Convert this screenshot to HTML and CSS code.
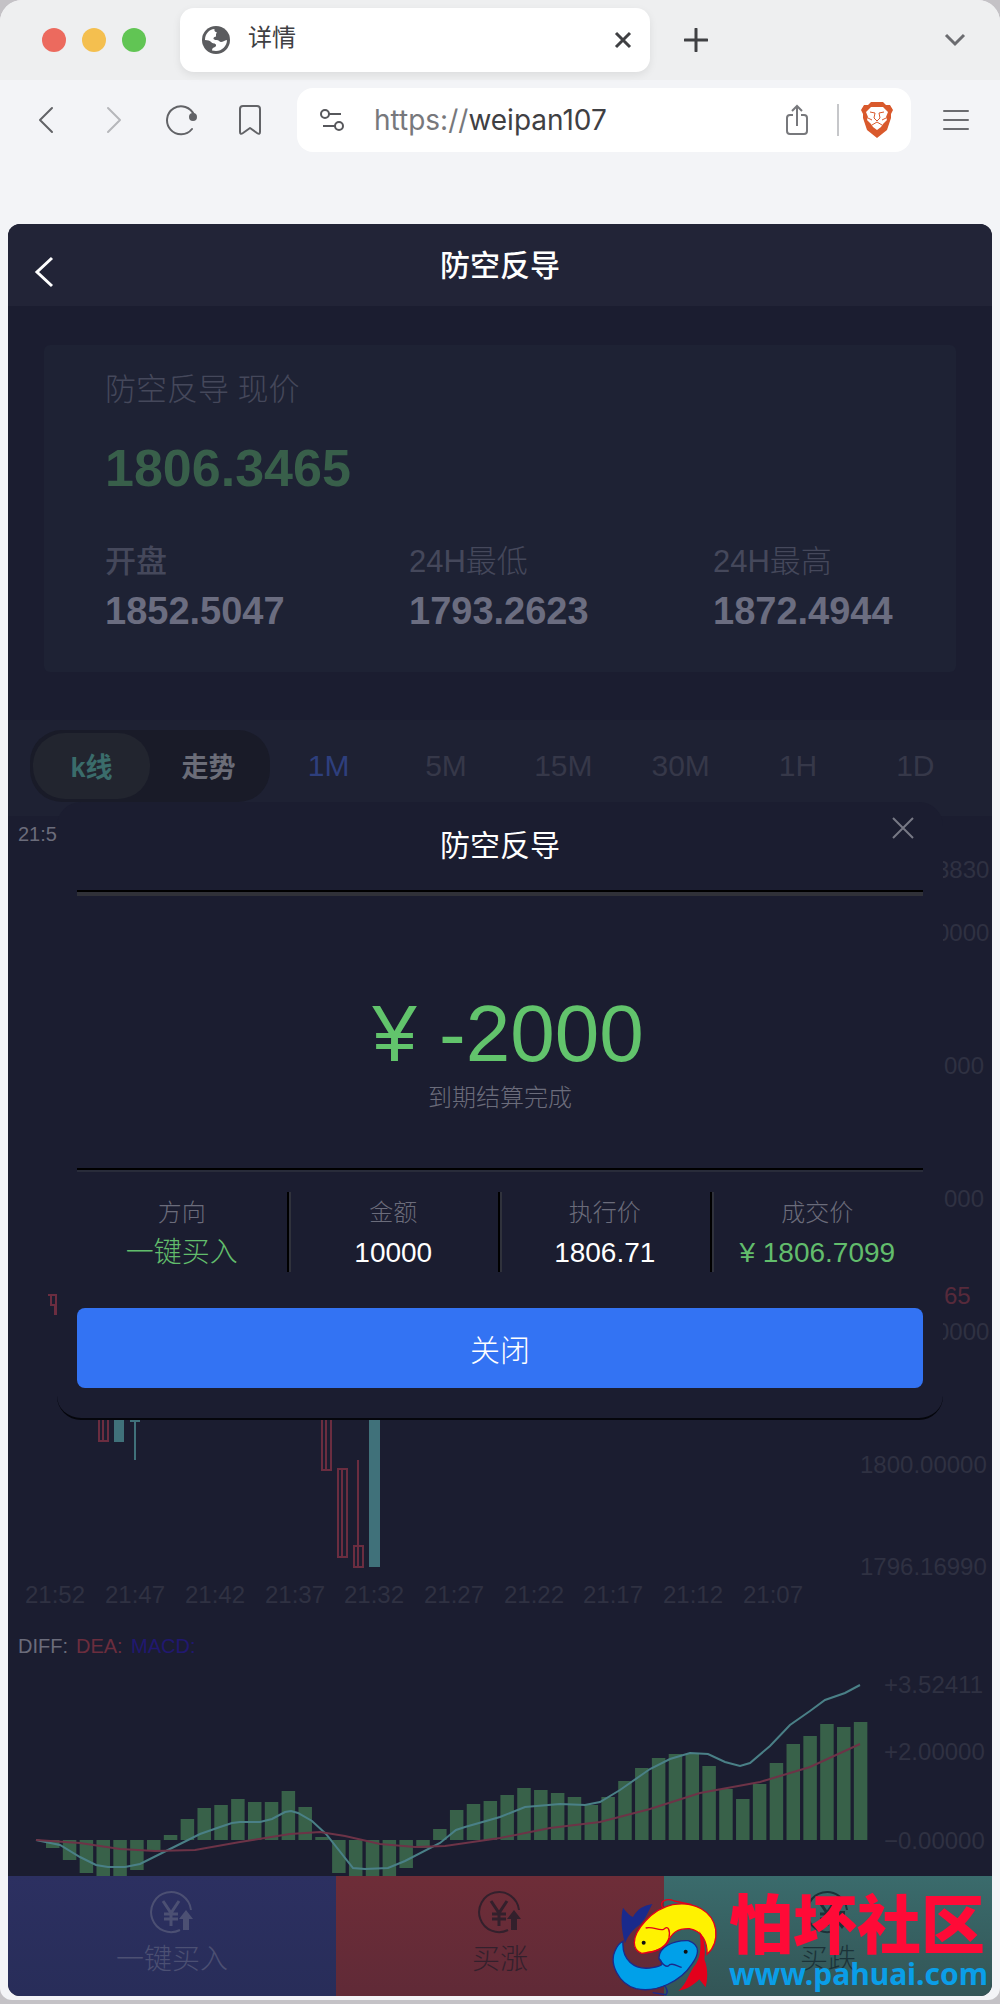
FILE: index.html
```html
<!DOCTYPE html>
<html lang="zh-CN">

<head>
    <meta charset="UTF-8">
    <meta name="viewport" content="width=device-width, initial-scale=1.0">
    <title>详情</title>
    <link rel="stylesheet" href="styles.css">
</head>

<body>
<div class="window">
    <!-- 标签栏 -->
    <div class="tab-bar">
        <div class="lights">
            <span class="light red"></span>
            <span class="light yellow"></span>
            <span class="light green"></span>
        </div>
        <div class="tab">
            <svg width="28" height="28" viewBox="0 0 28 28">
                <circle cx="14" cy="14" r="14" fill="#5b5c5f"/>
                <path d="M3 14C3 8 7 3.500 12.500 3C12 5 13 6 15 6.500C17 7 17 9 15.500 10C14 11 12 10.500 11.500 12C11 13.500 13 14 14.500 14C17 14 17.500 16 19 16C21 16 22 14.500 25 14C25 20 20 25 14 25L10 24.500C10 22 11.500 21.500 13 21C15 20 14 17.500 12 17.500C9.500 17.500 9 14 3 14Z" fill="#fff"/>
                <path d="M14 8L17 3L22 6L25 12L21 15C18 15 18 12 14 12Z" fill="#5b5c5f"/>
            </svg>
            <span class="tab-title">详情</span>
            <button class="icon-btn" aria-label="关闭标签">
                <svg width="18" height="18" viewBox="0 0 18 18" fill="none" stroke="#3f4043" stroke-width="3"><path d="M2 2L16 16M16 2L2 16"/></svg>
            </button>
        </div>
        <button class="icon-btn new-tab" aria-label="新标签">
            <svg width="24" height="24" viewBox="0 0 24 24" fill="none" stroke="#3f4043" stroke-width="3" stroke-linecap="round"><path d="M12 1V23M1 12H23"/></svg>
        </button>
        <button class="icon-btn more-tabs" aria-label="标签列表">
            <svg width="22" height="14" viewBox="0 0 22 14" fill="none" stroke="#6b6c70" stroke-width="3"><path d="M2 2L11 11L20 2"/></svg>
        </button>
    </div>

    <!-- 地址栏 -->
    <div class="tool-bar">
        <button class="icon-btn" aria-label="后退">
            <svg width="32" height="32" viewBox="0 0 32 32" fill="none" stroke="#626367" stroke-width="2" stroke-linecap="round" stroke-linejoin="round"><path d="M22 4L10 16L22 28"/></svg>
        </button>
        <button class="icon-btn" aria-label="前进">
            <svg width="32" height="32" viewBox="0 0 32 32" fill="none" stroke="#b6b7bb" stroke-width="2" stroke-linecap="round" stroke-linejoin="round"><path d="M10 4L22 16L10 28"/></svg>
        </button>
        <button class="icon-btn" aria-label="刷新">
            <svg width="32" height="32" viewBox="0 0 32 32" fill="none" stroke="#626367" stroke-width="2" stroke-linecap="round"><path d="M26 25A14 14 0 1 1 28 11"/><circle cx="27" cy="13" r="3" fill="#626367"/></svg>
        </button>
        <button class="icon-btn" aria-label="书签">
            <svg width="32" height="32" viewBox="0 0 32 32" fill="none" stroke="#626367" stroke-width="2" stroke-linejoin="round"><path d="M6 5Q6 2 9 2H23Q26 2 26 5V28Q26 31 23 29L16 24L9 29Q6 31 6 28Z"/></svg>
        </button>
        <div class="address">
            <svg width="26" height="26" viewBox="0 0 26 26" fill="none" stroke="#56575b" stroke-width="2"><circle cx="6" cy="7" r="4"/><path d="M10 7H22M4 19H16"/><circle cx="20" cy="19" r="4"/></svg>
            <label class="scheme" for="url">https://</label>
            <input type="text" id="url" class="url" value="weipan107">
            <button class="icon-btn" aria-label="分享">
                <svg width="24" height="32" viewBox="0 0 24 32" fill="none" stroke="#77787c" stroke-width="2"><path d="M8 11H5Q2 11 2 14V27Q2 30 5 30H19Q22 30 22 27V14Q22 11 19 11H16M12 22V2M7 7L12 2L17 7"/></svg>
            </button>
            <span class="separator"></span>
            <button class="icon-btn" aria-label="Brave">
                <svg width="32" height="36" viewBox="0 0 32 36">
                    <path d="M10 0H22L25 3L29 3L32 8L30 12L30 16L26 28L16 36L6 28L2 16L2 12L0 8L3 3L7 3Z" fill="#d9592c"/>
                    <path d="M16 5L22 5L27 10L25 15L26 18L22 22L20 25L16 28L12 25L10 22L6 18L7 15L5 10L10 5Z" fill="#fff"/>
                    <path d="M9 10L14 11L13 16L16 19L19 16L18 11L23 10M11 23L16 20L21 23M7 16L11 18M25 16L21 18" fill="none" stroke="#d9592c" stroke-width="1"/>
                </svg>
            </button>
        </div>
        <button class="icon-btn" aria-label="菜单">
            <svg width="28" height="24" viewBox="0 0 28 24" fill="none" stroke="#6b6c70" stroke-width="2" stroke-linecap="round"><path d="M2 3H26M2 12H26M2 21H26"/></svg>
        </button>
    </div>

    <!-- 页面内容 -->
    <div class="page">
        <header class="header">
            <button class="icon-btn back" aria-label="返回">
                <svg width="20" height="32" viewBox="0 0 20 32" fill="none" stroke="#fff" stroke-width="3"><path d="M18 2L3 16L18 30"/></svg>
            </button>
            <h1>防空反导</h1>
        </header>

        <section class="quote">
            <p class="quote-name">防空反导 现价</p>
            <p class="quote-price">1806.3465</p>
            <dl class="quote-list">
                <div>
                    <dt class="strong">开盘</dt>
                    <dd>1852.5047</dd>
                </div>
                <div>
                    <dt>24H最低</dt>
                    <dd>1793.2623</dd>
                </div>
                <div>
                    <dt>24H最高</dt>
                    <dd>1872.4944</dd>
                </div>
            </dl>
        </section>

        <nav class="period">
            <div class="switch">
                <button class="active">k线</button>
                <button>走势</button>
            </div>
            <div class="times">
                <button class="active">1M</button>
                <button>5M</button>
                <button>15M</button>
                <button>30M</button>
                <button>1H</button>
                <button>1D</button>
            </div>
        </nav>

        <svg class="chart" viewBox="8 816 984 1060">
            <text class="legend" x="18" y="841">21:5</text>
            <g class="axis">
                <text x="936" y="878">3830</text>
                <text x="936" y="941">0000</text>
                <text x="944" y="1074">000</text>
                <text x="944" y="1207">000</text>
                <text class="now" x="944" y="1304">65</text>
                <text x="936" y="1340">0000</text>
                <text x="860" y="1473">1800.00000</text>
                <text x="860" y="1575">1796.16990</text>
                <text x="884" y="1693">+3.52411</text>
                <text x="884" y="1760">+2.00000</text>
                <text x="884" y="1849">−0.00000</text>
            </g>
            <g class="axis">
                <text x="25" y="1603">21:52</text>
                <text x="105" y="1603">21:47</text>
                <text x="185" y="1603">21:42</text>
                <text x="265" y="1603">21:37</text>
                <text x="344" y="1603">21:32</text>
                <text x="424" y="1603">21:27</text>
                <text x="504" y="1603">21:22</text>
                <text x="583" y="1603">21:17</text>
                <text x="663" y="1603">21:12</text>
                <text x="743" y="1603">21:07</text>
            </g>
            <!-- k线 -->
            <g class="fall">
                <path d="M48 1295H57M51 1296V1305H55V1315M56 1296V1315"/>
                <path d="M99 1400H108V1441H99ZM103 1400V1441"/>
                <path d="M322 1400H331V1470H322ZM326 1400V1470"/>
                <path d="M338 1469H347V1557H338ZM342 1469V1557"/>
                <path d="M354 1546H363V1567H354ZM358 1460V1567"/>
            </g>
            <g class="rise">
                <rect x="114" y="1400" width="10" height="42"/>
                <rect x="130" y="1400" width="10" height="22"/>
                <rect x="134" y="1420" width="2" height="40"/>
                <rect x="369" y="1400" width="11" height="167"/>
            </g>
            <text class="legend" x="18" y="1653">DIFF:</text>
            <text class="legend dea" x="76" y="1653">DEA:</text>
            <text class="legend macd" x="131" y="1653">MACD:</text>
            <g class="bars" id="bars"></g>
            <polyline class="diff-line" points="36,1840 60,1845 80,1857 96,1865 108,1867 125,1867 140,1864 168,1850 200,1834 220,1827 232,1823 240,1822 260,1822 272,1819 285,1812 291,1811 298,1813 312,1821 326,1834 353,1868 365,1869 388,1868 405,1861 440,1843 456,1830 465,1827 500,1817 525,1807 560,1804 585,1805 600,1802 620,1790 650,1769 670,1759 690,1753 708,1754 725,1762 740,1766 750,1763 770,1746 790,1725 810,1711 825,1700 845,1693 860,1685"/>
            <polyline class="dea-line" points="36,1840 80,1843 120,1849 155,1851 195,1850 240,1842 290,1834 320,1832 345,1836 380,1844 415,1847 445,1846 500,1838 550,1828 600,1822 650,1809 700,1793 760,1782 810,1767 860,1744"/>
        </svg>

        <footer class="actions">
            <button class="quick">
                <svg width="44" height="44" viewBox="0 0 44 44" fill="none" stroke="currentColor" stroke-width="2"><path d="M30 40A20 20 0 1 1 41 20"/><path d="M13 11L21 23L29 11M21 23V36M14 24H28M14 29H28" stroke-width="3"/><path d="M36 20L43 29H39V40H33V29H29Z" fill="currentColor" stroke="none"/></svg>
                <span>一键买入</span>
            </button>
            <button class="up">
                <svg width="44" height="44" viewBox="0 0 44 44" fill="none" stroke="currentColor" stroke-width="2"><path d="M30 40A20 20 0 1 1 41 20"/><path d="M13 11L21 23L29 11M21 23V36M14 24H28M14 29H28" stroke-width="3"/><path d="M36 20L43 29H39V40H33V29H29Z" fill="currentColor" stroke="none"/></svg>
                <span>买涨</span>
            </button>
            <button class="down">
                <svg width="44" height="44" viewBox="0 0 44 44" fill="none" stroke="currentColor" stroke-width="2"><path d="M30 40A20 20 0 1 1 41 20"/><path d="M13 11L21 23L29 11M21 23V36M14 24H28M14 29H28" stroke-width="3"/><path d="M36 39L43 30H39V21H33V30H29Z" fill="currentColor" stroke="none"/></svg>
                <span>买跌</span>
            </button>
        </footer>

        <!-- 结算弹窗 -->
        <div class="dialog" role="dialog" aria-labelledby="dialog-title">
            <button class="icon-btn dialog-close" aria-label="关闭弹窗">
                <svg width="22" height="22" viewBox="0 0 22 22" fill="none" stroke="#777885" stroke-width="2"><path d="M1 1L21 21M21 1L1 21"/></svg>
            </button>
            <h2 id="dialog-title">防空反导</h2>
            <div class="result">
                <p class="amount">¥ -2000</p>
                <p class="tip">到期结算完成</p>
            </div>
            <dl class="detail">
                <div>
                    <dt>方向</dt>
                    <dd class="green-text">一键买入</dd>
                </div>
                <div>
                    <dt>金额</dt>
                    <dd>10000</dd>
                </div>
                <div>
                    <dt>执行价</dt>
                    <dd>1806.71</dd>
                </div>
                <div>
                    <dt>成交价</dt>
                    <dd class="green-text">¥ 1806.7099</dd>
                </div>
            </dl>
            <button class="confirm">关闭</button>
        </div>
    </div>

    <!-- 社区标识 -->
    <div class="brand">
        <svg width="108" height="100" viewBox="80 100 324 300">
            <path d="M122 242C112 205 108 165 116 135C128 150 138 160 146 163C158 140 178 128 204 124C192 145 184 170 166 186C148 200 132 215 122 242Z" fill="#1a2a8c"/>
            <path d="M150 240C150 205 200 140 265 126C330 115 385 145 394 200C398 235 385 260 368 275C370 240 355 205 315 198C280 197 262 210 250 240C235 262 205 268 172 272C155 265 150 255 150 240Z" fill="#fff200" stroke="#e3001b" stroke-width="4"/>
            <path d="M184 196C205 190 222 205 238 200C252 185 258 205 254 225C248 250 220 268 185 270M236 136C222 118 245 104 270 115L322 126" fill="none" stroke="#e3001b" stroke-width="4"/>
            <path d="M345 205C362 230 364 260 360 290C372 320 370 350 364 374L345 350C330 365 308 382 282 384C308 365 312 330 335 304C352 275 350 240 345 205Z" fill="#e3001b"/>
            <path d="M116 236C112 290 148 325 205 315C245 308 235 300 224 288C222 255 265 232 312 234C352 248 342 278 322 305C290 355 215 392 155 378C100 362 75 300 92 265C98 250 106 240 116 236Z" fill="#00a0e9" stroke="#1a2a8c" stroke-width="4"/>
            <path d="M224 288C232 304 248 318 256 306C270 300 280 312 292 314M240 368C250 380 250 390 245 396L205 390" fill="none" stroke="#1a2a8c" stroke-width="4"/>
            <circle cx="178" cy="240" r="6" fill="#111"/>
            <circle cx="304" cy="267" r="6" fill="#111"/>
        </svg>
        <div class="brand-text">
            <strong>怕坏社区</strong>
            <a href="#">www.pahuai.com</a>
        </div>
    </div>
</div>

<script>
    // MACD 柱子的高度，负数在零轴下方
    var data = [-8, -20, -33, -36, -36, -30, -10, 5, 21, 32, 35, 41, 38, 38, 49, 33, 3,
        -33, -36, -36, -36, -28, -8, 11, 30, 36, 39, 45, 52, 50, 47, 43, 35, 43, 59, 72,
        82, 86, 86, 74, 51, 41, 56, 77, 96, 104, 116, 113, 118];
    var bars = document.getElementById("bars");
    var zero = 1840;

    for (var i = 0; i < data.length; i++) {
        var rect = document.createElementNS("http://www.w3.org/2000/svg", "rect");
        rect.setAttribute("x", 46 + i * 16.83);
        rect.setAttribute("y", data[i] > 0 ? zero - data[i] : zero);
        rect.setAttribute("width", 13.5);
        rect.setAttribute("height", Math.abs(data[i]));
        bars.appendChild(rect);
    }
</script>
</body>

</html>
```
FILE: styles.css
```css
* {
    padding: 0;
    margin: 0;
    box-sizing: border-box;
}

body {
    background: #c4c2c6;
    font-family: "Liberation Sans", "Noto Sans CJK SC", sans-serif;
    padding-bottom: 4px;
}

button {
    border: 0;
    background: none;
    font: inherit;
    color: inherit;
    cursor: pointer;
}

.icon-btn {
    display: flex;
    align-items: center;
    justify-content: center;
}

.window {
    position: relative;
    background: #f3f4f7;
    border-radius: 22px 22px 12px 12px;
    overflow: hidden;
    padding-bottom: 4px;
}

/* 标签栏 */
.tab-bar {
    display: flex;
    align-items: center;
    height: 80px;
    padding: 0 34px 0 42px;
    background: #eeeff0;
}

.lights {
    display: flex;
    gap: 16px;
    margin-right: 34px;
}

.light {
    width: 24px;
    height: 24px;
    border-radius: 50%;
}

.red {
    background: #ec6a5e;
}

.yellow {
    background: #f4bf4f;
}

.green {
    background: #61c554;
}

.tab {
    display: flex;
    align-items: center;
    width: 470px;
    height: 64px;
    padding: 0 18px 0 22px;
    border-radius: 14px;
    background: #fff;
    box-shadow: 0 3px 8px rgba(0, 0, 0, .08);
}

.tab-title {
    flex: 1;
    margin-left: 18px;
    font-size: 24px;
    line-height: 32px;
    padding-bottom: 4px;
    color: #3f4043;
}

.new-tab {
    margin-left: 34px;
}

.more-tabs {
    margin-left: auto;
}

/* 地址栏 */
.tool-bar {
    display: flex;
    align-items: center;
    gap: 36px;
    height: 80px;
    padding: 0 30px;
}

.address {
    display: flex;
    align-items: center;
    flex: 1;
    min-width: 0;
    height: 64px;
    margin: 0 -5px 0 -5px;
    padding: 0 18px 0 22px;
    border-radius: 16px;
    background: #fff;
    font-family: Inter, sans-serif;
    font-size: 28px;
}

.address svg,
.tool-bar .icon-btn {
    flex-shrink: 0;
}

.scheme {
    margin-left: 29px;
    color: #77787c;
}

.url {
    flex: 1;
    min-width: 0;
    border: 0;
    outline: 0;
    background: none;
    font: inherit;
    color: #3f4043;
}

.separator {
    width: 2px;
    height: 32px;
    margin: 0 22px 0 28px;
    background: #c6c7ca;
}

/* 页面 */
.page {
    position: relative;
    margin: 64px 8px 0;
    border-radius: 12px;
    overflow: hidden;
    background: #1b1d30;
}

.header {
    display: flex;
    align-items: center;
    height: 82px;
    padding: 0 26px;
    background: #222437;
    color: #fff;
}

.header h1 {
    flex: 1;
    margin-right: 20px;
    padding-bottom: 4px;
    font-size: 30px;
    font-weight: 500;
    text-align: center;
}

.back {
    padding-top: 14px;
}

.quote {
    margin: 39px 36px 48px;
    padding: 25px 0 39px;
    border-radius: 6px;
    background: #1e2234;
    color: #45485b;
}

.quote-name,
.quote-price {
    padding-left: 61px;
}

.quote-name {
    font-size: 31px;
    font-weight: 300;
    line-height: 40px;
}

.quote-price {
    margin: 28px 0 44px;
    font-size: 52px;
    font-weight: bold;
    line-height: 60px;
    color: #385f4a;
}

.quote-list {
    display: grid;
    grid-template-columns: repeat(3, 1fr);
}

.quote-list div {
    padding-left: 61px;
}

.quote-list dt {
    font-size: 31px;
    font-weight: 300;
    line-height: 40px;
}

.quote-list .strong {
    font-weight: 500;
}

.quote-list dd {
    margin-top: 7px;
    font-size: 38px;
    font-weight: bold;
    line-height: 44px;
    color: #6b6d80;
}

.period {
    display: flex;
    align-items: flex-start;
    height: 96px;
    padding: 10px 18px 0 22px;
    background: #1e2133;
}

.switch {
    display: flex;
    width: 240px;
    padding: 3px;
    border-radius: 32px;
    background: #191b28;
    font-size: 27px;
    font-weight: bold;
    color: #6b6d78;
}

.switch button {
    flex: 1;
    height: 66px;
    padding-bottom: 2px;
    border-radius: 32px;
}

.switch .active {
    background: #22252f;
    color: #3a6c6b;
}

.times {
    display: grid;
    grid-template-columns: repeat(6, 1fr);
    flex: 1;
    font-size: 30px;
    line-height: 72px;
    color: #363849;
}

.times .active {
    color: #2e3f7d;
}

/* 图表 */
.chart {
    display: block;
    width: 100%;
}

.legend {
    font-size: 20px;
    fill: #6b6c7b;
}

.dea {
    fill: #6b2d3e;
}

.macd {
    fill: #211870;
}

.axis {
    font-size: 24px;
    fill: #2f3142;
}

.now {
    fill: #572a3b;
}

.fall {
    fill: none;
    stroke: #6b2d40;
    stroke-width: 2;
}

.rise {
    fill: #40717a;
}

.bars {
    fill: #386149;
}

.diff-line,
.dea-line {
    fill: none;
    stroke: #4a8087;
    stroke-width: 2;
}

.dea-line {
    stroke: #6d3347;
}

/* 底部按钮 */
.actions {
    display: grid;
    grid-template-columns: repeat(3, 1fr);
    height: 120px;
}

.actions button {
    display: flex;
    flex-direction: column;
    align-items: center;
    padding-top: 14px;
    font-size: 28px;
    font-weight: 300;
    line-height: 40px;
}

.actions svg {
    margin-bottom: 6px;
}

.quick {
    background: linear-gradient(#2c3061, #282d59);
    color: #4c5073;
}

.up {
    background: linear-gradient(#6e2d38, #602a37);
    color: #33202c;
}

.down {
    background: linear-gradient(#3a6b6c, #335556);
    color: #1b3238;
}

/* 弹窗 */
.dialog {
    position: absolute;
    top: 578px;
    left: 49px;
    right: 49px;
    padding: 24px 20px 30px;
    border-bottom: 2px solid #05060c;
    border-radius: 24px;
    background: #1b1d30;
    color: #fff;
    text-align: center;
}

.dialog-close {
    position: absolute;
    top: 15px;
    right: 29px;
}

.dialog h2 {
    padding-bottom: 24px;
    border-bottom: 2px solid #000;
    box-shadow: 0 4px 0 #303138;
    font-size: 30px;
    font-weight: 400;
    line-height: 40px;
}

.result {
    padding: 96px 0 52px;
}

.amount {
    padding-left: 16px;
    font-size: 80px;
    line-height: 92px;
    color: #62c46c;
}

.tip {
    font-size: 24px;
    font-weight: 300;
    line-height: 36px;
    color: #6b6c7b;
}

.detail {
    display: grid;
    grid-template-columns: repeat(4, 1fr);
    padding: 22px 0 36px;
    border-top: 2px solid #000;
    box-shadow: inset 0 2px 0 #292c3a;
}

.detail div {
    height: 80px;
    padding-top: 3px;
    border-right: 2px solid #000;
    box-shadow: 2px 0 0 #30323c;
}

.detail div:last-child {
    border: 0;
    box-shadow: none;
}

.detail dt {
    font-size: 24px;
    font-weight: 300;
    line-height: 36px;
    color: #6b6c7b;
}

.detail dd {
    font-size: 28px;
    line-height: 44px;
}

.detail .green-text {
    font-weight: 300;
    color: #62bd6c;
}

.confirm {
    display: block;
    width: 100%;
    height: 80px;
    border-radius: 8px;
    background: #3373f3;
    font-size: 30px;
    font-weight: 300;
}

/* 社区标识 */
.brand {
    position: absolute;
    right: 12px;
    bottom: 4px;
    display: flex;
    align-items: center;
}

.brand-text {
    display: flex;
    flex-direction: column;
    margin-left: 10px;
    padding-bottom: 4px;
}

.brand strong {
    font-size: 64px;
    font-weight: 900;
    line-height: 60px;
    color: #ff0a37;
}

.brand a {
    font: bold 30px/36px "Noto Sans", sans-serif;
    color: #0a9ee8;
    text-decoration: none;
}
```
